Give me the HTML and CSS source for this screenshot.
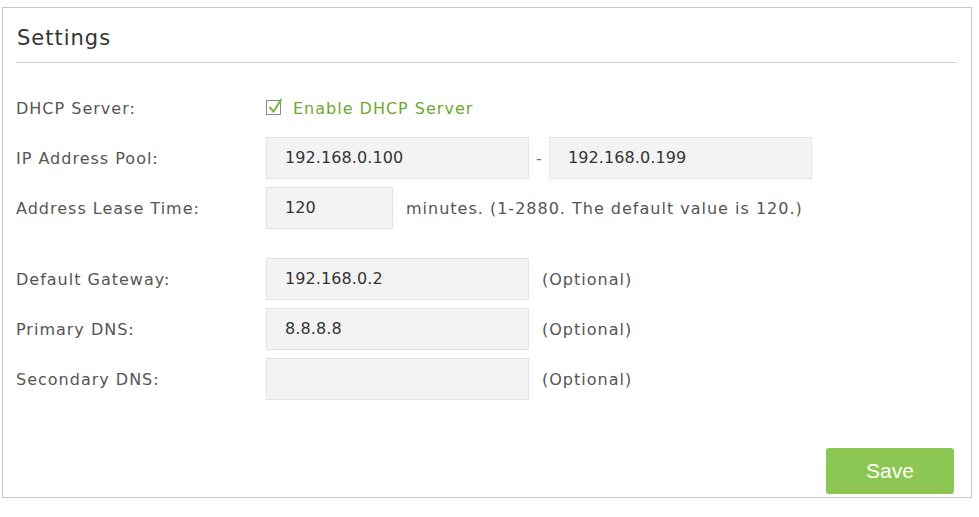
FILE: index.html
```html
<!DOCTYPE html>
<html>
<head>
<meta charset="utf-8">
<link rel="stylesheet" href="styles.css">
</head>
<body>
<div class="panel">
  <div class="header">Settings</div>
  <div class="form">
    <div class="row">
      <div class="label">DHCP Server:</div>
      <div class="check">
        <svg class="cb" width="22" height="20" viewBox="0 0 22 20">
          <rect x="0.5" y="4.5" width="14" height="14" fill="#fff" stroke="#8a8a8a" stroke-width="1"/>
          <path d="M3.5 11 L7.5 15.5 L15.5 3" fill="none" stroke="#7cb342" stroke-width="2"/>
        </svg>
        <span class="check-text">Enable DHCP Server</span>
      </div>
    </div>
    <div class="row">
      <div class="label">IP Address Pool:</div>
      <div class="field wide">192.168.0.100</div>
      <div class="dash">-</div>
      <div class="field wide">192.168.0.199</div>
    </div>
    <div class="row">
      <div class="label">Address Lease Time:</div>
      <div class="field short">120</div>
      <div class="note">minutes. (1-2880. The default value is 120.)</div>
    </div>
    <div class="row gap-top">
      <div class="label">Default Gateway:</div>
      <div class="field wide">192.168.0.2</div>
      <div class="note">(Optional)</div>
    </div>
    <div class="row">
      <div class="label">Primary DNS:</div>
      <div class="field wide">8.8.8.8</div>
      <div class="note">(Optional)</div>
    </div>
    <div class="row">
      <div class="label">Secondary DNS:</div>
      <div class="field wide"></div>
      <div class="note">(Optional)</div>
    </div>
  </div>
  <div class="actions">
    <button class="save">Save</button>
  </div>
</div>
</body>
</html>
```
FILE: styles.css
```css
html, body {
  margin: 0;
  padding: 0;
  background: #fff;
}
body {
  font-family: "DejaVu Sans", Verdana, sans-serif;
  font-size: 16px;
  color: #555;
}
.panel {
  margin: 7px 0 0 2px;
  border: 1px solid #c8c8c8;
  padding: 0 14px 0 13px;
  box-sizing: border-box;
  width: 970px;
  height: 491px;
  display: flex;
  flex-direction: column;
}
.header {
  padding-top: 19px;
  padding-bottom: 12px;
  line-height: 23px;
  font-size: 21px;
  letter-spacing: 1px;
  color: #333;
  border-bottom: 1px solid #cfcfcf;
  padding-left: 1px;
}
.form {
  margin-top: 24px;
  display: flex;
  flex-direction: column;
  gap: 8px;
}
.row {
  display: flex;
  align-items: center;
  height: 42px;
}
.row.gap-top {
  margin-top: 21px;
}
.label {
  width: 250px;
  flex: none;
  letter-spacing: 1px;
}
.check {
  display: flex;
  align-items: center;
  gap: 5px;
}
.cb {
  display: block;
  margin-top: -5px;
}
.check-text {
  color: #6ea832;
  letter-spacing: 1px;
}
.field {
  height: 42px;
  box-sizing: border-box;
  background: #f3f3f3;
  border: 1px solid #e4e4e4;
  color: #333;
  padding-left: 18px;
  line-height: 40px;
  letter-spacing: 0.1px;
  flex: none;
}
.field.wide {
  width: 263px;
}
.field.short {
  width: 127px;
}
.dash {
  width: 20px;
  text-align: center;
  color: #777;
}
.note {
  margin-left: 13px;
  letter-spacing: 1px;
}
.actions {
  margin-top: auto;
  padding-bottom: 3px;
  display: flex;
  justify-content: flex-end;
  padding-right: 3px;
}
.save {
  width: 128px;
  height: 46px;
  border: none;
  border-radius: 3px;
  background: #8cc653;
  color: #fff;
  font-family: "Liberation Sans", Arial, sans-serif;
  font-size: 21px;
}
```
